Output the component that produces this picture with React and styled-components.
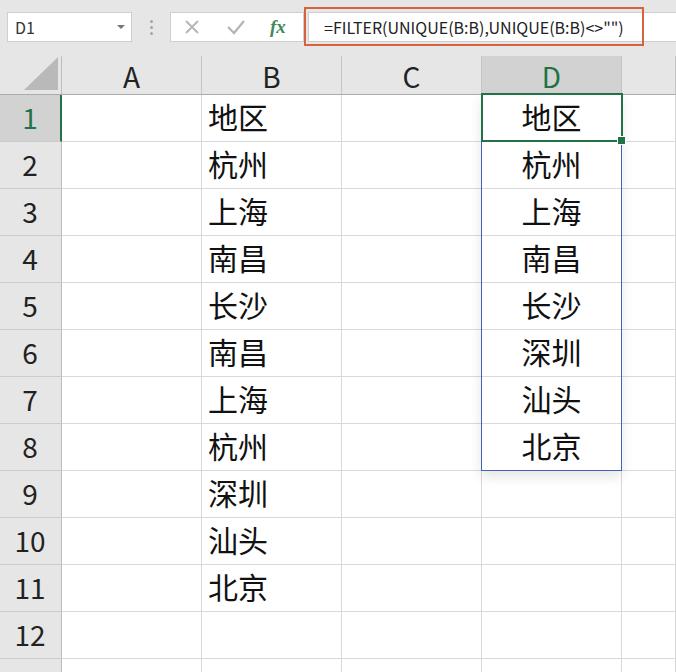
import styled, { createGlobalStyle } from 'styled-components';

// ─── GLOBAL ───
const GlobalStyle = createGlobalStyle`
  html, body {
    margin: 0;
    padding: 0;
    background: #e6e6e6;
    overflow: hidden;
  }
  * { box-sizing: border-box; }
`;

const CJK = `"Noto Sans CJK SC", "Noto Sans", sans-serif`;

// ─── TOOLBAR ───
const Toolbar = styled.div`
  position: relative;
  height: 56px;
  display: flex;
  align-items: flex-start;
  padding: 12px 0 0 7px;
  background: #e6e6e6;
  font-family: ${CJK};
`;

const NameBox = styled.div`
  width: 125px;
  height: 30px;
  background: #fff;
  border: 1px solid #cfcfcf;
  display: flex;
  align-items: center;
  justify-content: space-between;
  padding: 0 6px 0 7px;
  font-size: 16px;
  color: #333;
`;

const Caret = styled.span`
  width: 0;
  height: 0;
  border-left: 4px solid transparent;
  border-right: 4px solid transparent;
  border-top: 4px solid #777;
`;

const Grip = styled.div`
  width: 38px;
  height: 30px;
  display: flex;
  flex-direction: column;
  align-items: center;
  justify-content: center;
  gap: 3px;

  span {
    width: 3px;
    height: 3px;
    border-radius: 50%;
    background: #a5a5a5;
  }
`;

const FxBox = styled.div`
  width: 134px;
  height: 30px;
  background: #fff;
  border: 1px solid #cfcfcf;
  display: flex;
  align-items: center;
  padding-left: 13px;
  gap: 26px;
`;

const FxLabel = styled.span`
  font-family: "Liberation Serif", serif;
  font-style: italic;
  font-weight: bold;
  font-size: 19px;
  color: #3e8a5c;
  margin-left: -2px;
`;

const FormulaInput = styled.div`
  flex: 1;
  height: 30px;
  margin-left: 4px;
  background: #fff;
  border: 1px solid #cfcfcf;
  border-right: none;
  display: flex;
  align-items: center;
  padding-left: 15px;
  font-size: 16px;
  color: #222;
  white-space: nowrap;
`;

const Highlight = styled.div`
  position: absolute;
  left: 304px;
  top: 7px;
  width: 340px;
  height: 39px;
  border: 2px solid #d5633d;
  pointer-events: none;
`;

// ─── GRID ───
const Sheet = styled.div`
  position: relative;
  background: #fff;
  font-family: ${CJK};
`;

const Row = styled.div`
  display: flex;
  height: ${p => p.$h}px;
`;

const Corner = styled.div`
  width: 62px;
  flex-shrink: 0;
  background: #e6e6e6;
  border-right: 1px solid #bdbdbd;
  border-bottom: 1px solid #ababab;
  position: relative;

  svg {
    position: absolute;
    right: 3px;
    bottom: 4px;
  }
`;

const ColHeader = styled.div`
  flex: ${p => (p.$fill ? 1 : '0 0 140px')};
  background: ${p => (p.$active ? '#d2d2d2' : '#e6e6e6')};
  color: ${p => (p.$active ? '#217346' : '#222')};
  border-right: 1px solid #c4c4c4;
  border-bottom: 1px solid #ababab;
  display: flex;
  align-items: center;
  justify-content: center;
  font-size: 28px;
  padding-top: 1px;
`;

const RowHeader = styled.div`
  width: 62px;
  flex-shrink: 0;
  background: ${p => (p.$active ? '#d2d2d2' : '#e6e6e6')};
  color: ${p => (p.$active ? '#217346' : '#222')};
  border-right: ${p => (p.$active ? '2px solid #217346' : '1px solid #bdbdbd')};
  border-bottom: 1px solid #cdcdcd;
  display: flex;
  align-items: center;
  justify-content: center;
  font-size: 28px;
  padding: 0 ${p => (p.$active ? '0' : '1px')} 3px 0;
`;

const Cell = styled.div`
  flex: ${p => (p.$fill ? 1 : '0 0 140px')};
  border-right: 1px solid #d9d9d9;
  border-bottom: 1px solid #d9d9d9;
  display: flex;
  align-items: center;
  justify-content: ${p => (p.$center ? 'center' : 'flex-start')};
  padding-left: ${p => (p.$center ? '0' : '6px')};
  padding-bottom: 4px;
  font-size: 30px;
  color: #111;
  white-space: nowrap;
`;

const SpillRange = styled.div`
  position: absolute;
  left: 481px;
  top: 38px;
  width: 141px;
  height: 377px;
  border: 1px solid #3f63b5;
  box-shadow: 0 6px 12px rgba(0, 0, 0, 0.1);
  pointer-events: none;
`;

const Selection = styled.div`
  position: absolute;
  left: 481px;
  top: 37px;
  width: 142px;
  height: 49px;
  border: 2px solid #217346;
  pointer-events: none;

  &::after {
    content: '';
    position: absolute;
    right: -5px;
    bottom: -5px;
    width: 7px;
    height: 7px;
    background: #217346;
    border: 1px solid #fff;
  }
`;

const colB = ['地区', '杭州', '上海', '南昌', '长沙', '南昌', '上海', '杭州', '深圳', '汕头', '北京', '', ''];
const colD = ['地区', '杭州', '上海', '南昌', '长沙', '深圳', '汕头', '北京', '', '', '', '', ''];

export default function App() {
  return (
    <>
      <GlobalStyle />
      <Toolbar>
        <NameBox>
          D1
          <Caret />
        </NameBox>
        <Grip>
          <span />
          <span />
          <span />
        </Grip>
        <FxBox>
          <svg width="16" height="16" viewBox="0 0 16 16">
            <path d="M2 2 L14 14 M14 2 L2 14" stroke="#b4b4b4" strokeWidth="1.8" fill="none" />
          </svg>
          <svg width="20" height="16" viewBox="0 0 20 16">
            <path d="M2 8 L8 14 L18 2" stroke="#b4b4b4" strokeWidth="2.2" fill="none" />
          </svg>
          <FxLabel>fx</FxLabel>
        </FxBox>
        <FormulaInput>=FILTER(UNIQUE(B:B),UNIQUE(B:B)&lt;&gt;"")</FormulaInput>
        <Highlight />
      </Toolbar>
      <Sheet>
        <Row $h={39}>
          <Corner>
            <svg width="34" height="33" viewBox="0 0 34 33">
              <polygon points="34,0 34,33 0,33" fill="#b9b9b9" />
            </svg>
          </Corner>
          {['A', 'B', 'C', 'D'].map(c => (
            <ColHeader key={c} $active={c === 'D'}>
              {c}
            </ColHeader>
          ))}
          <ColHeader $fill />
        </Row>
        {colB.map((b, i) => (
          <Row key={i} $h={47}>
            <RowHeader $active={i === 0}>{i + 1}</RowHeader>
            <Cell />
            <Cell>{b}</Cell>
            <Cell />
            <Cell $center>{colD[i]}</Cell>
            <Cell $fill />
          </Row>
        ))}
        <SpillRange />
        <Selection />
      </Sheet>
    </>
  );
}
